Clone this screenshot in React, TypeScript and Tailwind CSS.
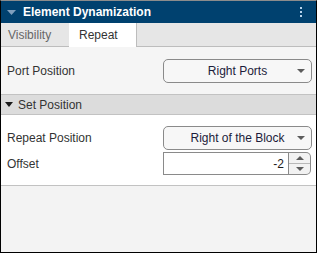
import React from "react";

const Caret = () => (
  <svg width="8" height="4" viewBox="0 0 8 4">
    <path d="M0 0 L8 0 L4 4 Z" fill="#5c5c5c" />
  </svg>
);

const Dropdown = ({ value }: { value: string }) => {
  return (
    <div className="relative flex items-center justify-center w-[149px] h-[24px] rounded-[5px] border border-[#8a8a8a] bg-[#f7f7f7] text-[#1c1c3a]">
      <span>{value}</span>
      <span className="absolute right-[6px] top-[9px] flex">
        <Caret />
      </span>
    </div>
  );
};

const Spinner = ({ value }: { value: string }) => {
  return (
    <div className="flex w-[148px] h-[23px]">
      <div className="flex flex-1 items-center justify-end pr-[4px] border border-[#8a8a8a] bg-white text-[#1c1c1c]">
        {value}
      </div>
      <div className="flex flex-col w-[22px] border border-l-0 border-[#8a8a8a] rounded-r-[5px] bg-[#f2f2f2] overflow-hidden">
        <div className="flex flex-1 items-center justify-center border-b border-[#b8b8b8]">
          <svg width="8" height="4" viewBox="0 0 8 4">
            <path d="M0 4 L8 4 L4 0 Z" fill="#5c5c5c" />
          </svg>
        </div>
        <div className="flex flex-1 items-center justify-center">
          <Caret />
        </div>
      </div>
    </div>
  );
};

const App = () => {
  return (
    <div
      className="flex flex-col w-[317px] h-[253px] border border-black border-t-[#8c8c8c] bg-[#f3f3f3] text-[12px] text-[#333333]"
      style={{ fontFamily: '"Liberation Sans", Arial, sans-serif' }}
    >
      <div className="flex items-center h-[22px] bg-[#00416f] text-white">
        <span className="flex ml-[6px] mr-[7px]">
          <svg width="9" height="5" viewBox="0 0 9 5">
            <path d="M0 0 L9 0 L4.5 5 Z" fill="#7f9fbd" />
          </svg>
        </span>
        <span className="font-bold text-[12px]">Element Dynamization</span>
        <span className="ml-auto mr-[14px] flex flex-col gap-[2px]">
          <span className="w-[2px] h-[2px] bg-[#b7d3ec]" />
          <span className="w-[2px] h-[2px] bg-[#b7d3ec]" />
          <span className="w-[2px] h-[2px] bg-[#b7d3ec]" />
        </span>
      </div>
      <div className="flex h-[24px] bg-[#e6e6e6]">
        <div className="flex items-center w-[68px] pl-[7px] border-b border-[#bdbdbd] text-[#666666]">
          Visibility
        </div>
        <div className="flex items-center w-[68px] pl-[10px] bg-white border-r border-[#bdbdbd] text-[#333333]">
          Repeat
        </div>
        <div className="flex-1 border-b border-[#bdbdbd]" />
      </div>
      <div className="flex items-center justify-between h-[47px] pl-[6px] pr-[4px] bg-[#f5f5f5]">
        <span>Port Position</span>
        <Dropdown value="Right Ports" />
      </div>
      <div className="flex items-center h-[21px] bg-[#dcdcdc] border-y border-[#c2c2c2]">
        <span className="flex ml-[4px] mr-[5px]">
          <svg width="8" height="5" viewBox="0 0 8 5">
            <path d="M0 0 L8 0 L4 5 Z" fill="#1a1a1a" />
          </svg>
        </span>
        <span className="text-[#333333]">Set Position</span>
      </div>
      <div className="flex flex-col gap-[2px] pt-[11px] pb-[10px] pl-[6px] pr-[4px] bg-white border-b border-[#c2c2c2]">
        <div className="flex items-center justify-between">
          <span>Repeat Position</span>
          <Dropdown value="Right of the Block" />
        </div>
        <div className="flex items-center justify-between pr-[1px]">
          <span>Offset</span>
          <Spinner value="-2" />
        </div>
      </div>
      <div className="flex-1 bg-[#f3f3f3]" />
    </div>
  );
};

export default App;
